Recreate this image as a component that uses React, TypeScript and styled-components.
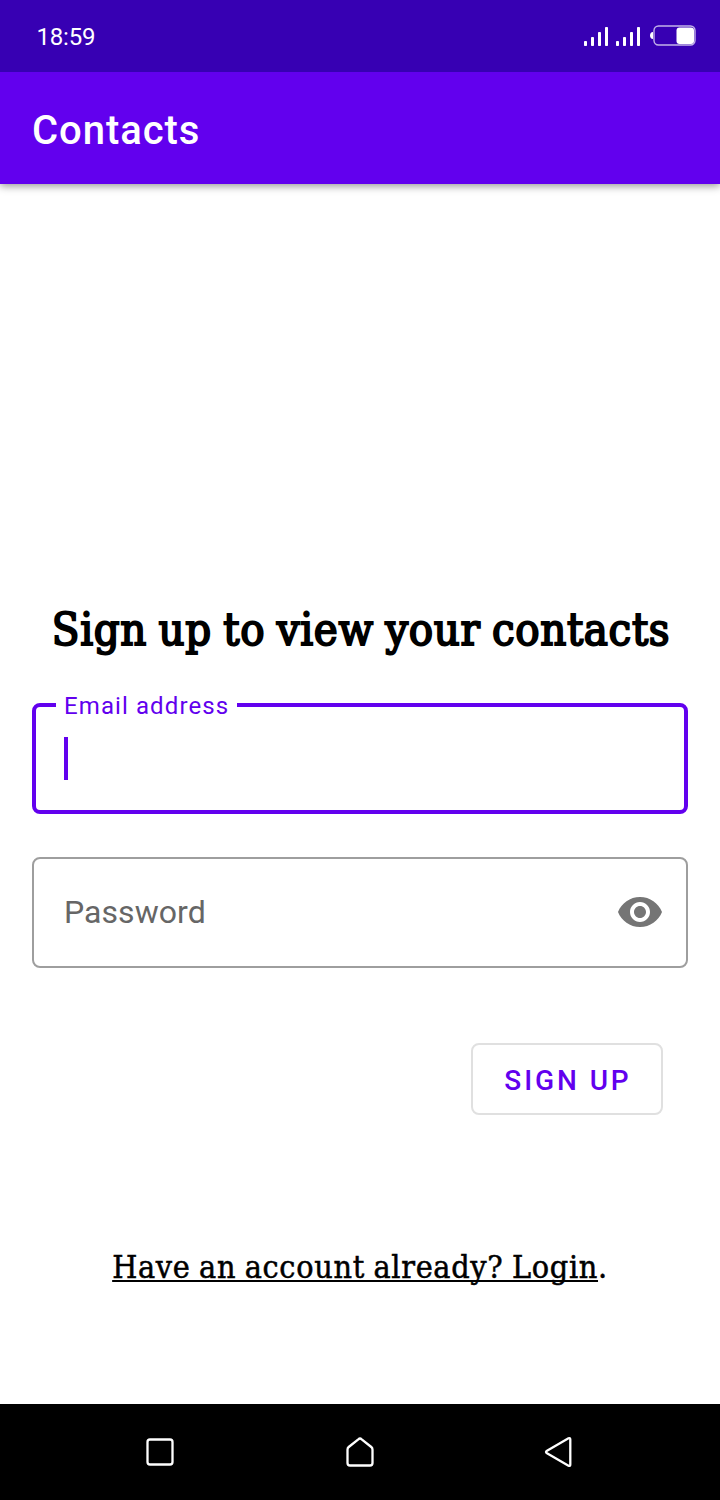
import React from "react";
import styled, { createGlobalStyle } from "styled-components";

const violet = "#6200ee";
const slab = `"Roboto Slab", "DejaVu Serif Condensed", "DejaVu Serif", serif`;

const GlobalStyle = createGlobalStyle`
  * { box-sizing: border-box; }
  body { margin: 0; background: #fff; font-family: Roboto, sans-serif; }
`;

const Screen = styled.div`
  display: flex;
  flex-direction: column;
  width: 720px;
  height: 1500px;
  background: #fff;
`;

const StatusBar = styled.header`
  position: relative;
  z-index: 1;
  display: flex;
  align-items: center;
  justify-content: space-between;
  height: 72px;
  padding: 0 24px 0 36px;
  background: #3700b3;
  color: #fff;
`;

const Clock = styled.span`
  font-size: 24px;
  line-height: 28px;
  margin-top: 2px;
  letter-spacing: -0.15px;
  padding-left: 0.4px;
`;

const AppBar = styled.div`
  display: flex;
  align-items: center;
  height: 112px;
  padding: 6px 32px 0;
  background: ${violet};
  box-shadow: 0 2px 8px rgba(0, 0, 0, 0.42);
`;

const AppTitle = styled.h1`
  margin: 0;
  color: #fff;
  font-size: 40px;
  font-weight: 500;
  line-height: 48px;
  letter-spacing: 0.95px;
`;

const Form = styled.main`
  display: flex;
  flex: 1;
  flex-direction: column;
  padding: 416px 32px 0;
`;

const Heading = styled.h2`
  margin: 0;
  height: 60px;
  padding-left: 2px;
  color: #000;
  font-family: ${slab};
  font-size: 45px;
  font-weight: 400;
  line-height: 60px;
  letter-spacing: 0.62px;
  word-spacing: -1.9px;
  text-align: center;
  white-space: nowrap;
  -webkit-text-stroke: 1.9px #000;
`;

const Field = styled.div<{ $focused?: boolean }>`
  position: relative;
  display: flex;
  align-items: center;
  justify-content: space-between;
  height: 111px;
  margin-top: 43px;
  padding: ${(p) =>
    p.$focused ? "0 28px" : "0 22px 2px 30px"};
  border: ${(p) => (p.$focused ? `4px solid ${violet}` : "2px solid #9e9e9e")};
  border-radius: 8px;
`;

const FloatingLabel = styled.label`
  position: absolute;
  top: -15px;
  left: 20px;
  width: 181px;
  padding: 0 8px;
  background: #fff;
  color: ${violet};
  font-size: 24px;
  line-height: 28px;
  letter-spacing: 1.1px;
  white-space: nowrap;
`;

const Caret = styled.span`
  width: 4px;
  height: 43px;
  background: ${violet};
`;

const Placeholder = styled.span`
  color: #666;
  font-size: 32px;
  line-height: 40px;
  letter-spacing: 0.05px;
`;

const SignUpButton = styled.button`
  align-self: flex-end;
  width: 192px;
  height: 72px;
  margin: 75px 25px 0 0;
  padding: 4px 0 0 2px;
  border: 2px solid #e0e0e0;
  border-radius: 8px;
  background: #fff;
  color: ${violet};
  font: 500 28px/36px Roboto, sans-serif;
  letter-spacing: 2.9px;
  white-space: nowrap;
`;

const LoginLine = styled.p`
  margin: 130px 0 0;
  height: 44px;
  color: #000;
  font-family: ${slab};
  font-size: 32px;
  line-height: 44px;
  letter-spacing: 0.68px;
  word-spacing: -1.2px;
  text-align: center;
  white-space: nowrap;
  -webkit-text-stroke: 0.5px #000;
`;

const LoginLink = styled.a`
  text-decoration: underline;
  text-decoration-thickness: 2px;
  text-decoration-skip-ink: none;
  text-underline-offset: 2px;
`;

const NavBar = styled.nav`
  display: flex;
  align-items: center;
  justify-content: space-between;
  height: 96px;
  padding: 0 140px;
  background: #000;
`;

const StatusIcons = () => (
  <svg width="114" height="24" viewBox="582 24 114 24" fill="#fff">
    {[584, 616].map((x) => (
      <g key={x}>
        <rect x={x} y="41" width="3" height="5" rx="0.8" />
        <rect x={x + 7} y="37" width="3" height="9" rx="0.8" />
        <rect x={x + 14} y="32" width="3" height="14" rx="0.8" />
        <rect x={x + 21} y="27" width="3" height="19" rx="0.8" />
      </g>
    ))}
    <path d="M653 32c-4 0-4 7 0 7z" />
    <rect x="654" y="26" width="41" height="19" rx="4.5" fill="none" stroke="#fff" strokeOpacity="0.7" strokeWidth="1.4" />
    <rect x="676.5" y="27.5" width="17.5" height="16.5" rx="3" />
  </svg>
);

const EyeIcon = () => (
  <svg width="48" height="48" viewBox="0 0 24 24" fill="#757575">
    <path d="M12 4.5C7 4.5 2.73 7.61 1 12c1.73 4.39 6 7.5 11 7.5s9.27-3.11 11-7.5c-1.73-4.39-6-7.5-11-7.5zM12 17c-2.76 0-5-2.24-5-5s2.24-5 5-5 5 2.24 5 5-2.24 5-5 5zm0-8c-1.66 0-3 1.34-3 3s1.34 3 3 3 3-1.34 3-3-1.34-3-3-3z" />
  </svg>
);

const navShapes = [
  "M10 7.5H30Q32.5 7.5 32.5 10V30Q32.5 32.5 30 32.5H10Q7.5 32.5 7.5 30V10Q7.5 7.5 10 7.5Z",
  "M18.3 7.3Q20 5.8 21.7 7.3L31.3 15Q32.5 16 32.5 17.8V31Q32.5 33.5 30 33.5H10Q7.5 33.5 7.5 31V17.8Q7.5 16 8.7 15Z",
  "M28.5 6.3Q30.3 5.4 30.3 7.5V32.5Q30.3 34.6 28.5 33.7L7 21.2Q5 20 7 18.8Z",
];

export default function App() {
  return (
    <Screen>
      <GlobalStyle />
      <StatusBar>
        <Clock>18:59</Clock>
        <StatusIcons />
      </StatusBar>
      <AppBar>
        <AppTitle>Contacts</AppTitle>
      </AppBar>
      <Form>
        <Heading>Sign up to view your contacts</Heading>
        <Field $focused>
          <FloatingLabel>Email address</FloatingLabel>
          <Caret />
        </Field>
        <Field>
          <Placeholder>Password</Placeholder>
          <EyeIcon />
        </Field>
        <SignUpButton>SIGN UP</SignUpButton>
        <LoginLine>
          <LoginLink>Have an account already? Login</LoginLink>.
        </LoginLine>
      </Form>
      <NavBar>
        {navShapes.map((d) => (
          <svg key={d} width="40" height="40" viewBox="0 0 40 40" fill="none" stroke="#fff" strokeWidth="2.3">
            <path d={d} />
          </svg>
        ))}
      </NavBar>
    </Screen>
  );
}
